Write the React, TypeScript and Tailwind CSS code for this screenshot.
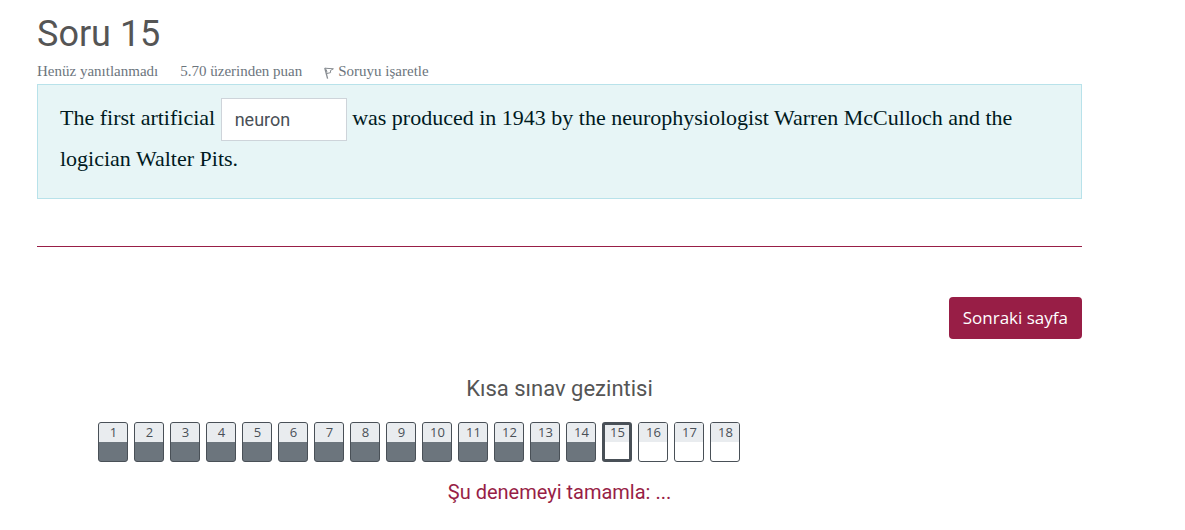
import { useState } from "react";

const pages = Array.from({ length: 18 }, (_, i) => i + 1);
const current = 15;

function FlagIcon() {
  return (
    <svg
      viewBox="0 0 10 12"
      className="mt-1 h-3 w-[10px]"
      fill="none"
      stroke="#868b90"
      strokeWidth="1"
      aria-hidden="true"
    >
      <path d="M0.8 1 L3.6 11.6" strokeWidth="1.3" />
      <path d="M0.8 1.2 L9.4 1.8 L6.4 3.6 L6.6 5.6 L2.6 6.6" />
      <path d="M2.2 2.4 L3 5.4" />
    </svg>
  );
}

function PageButton({ page }: { page: number }) {
  const answered = page < current;
  const active = page === current;
  return (
    <a
      href={`#page-${page}`}
      aria-current={active ? "page" : undefined}
      className={`block h-10 w-[30px] overflow-hidden rounded-[3px] border-[#495057] text-center text-[13px] ${
        active ? "border-3" : "border"
      } ${answered ? "bg-[#6c757d]" : "bg-white"}`}
    >
      <span
        className={`block bg-[#e9ecef] pl-px text-[#495057] ${
          active ? "h-[17px] leading-[15px]" : "h-[19px] leading-[19px]"
        }`}
      >
        {page}
      </span>
    </a>
  );
}

export default function App() {
  const [answer, setAnswer] = useState("neuron");
  return (
    <main className="bg-white pr-[103px] pb-6 pl-[37px] font-['Roboto',sans-serif] text-[#555]">
      <h1 className="pt-3 text-[36px] leading-[44px]">Soru 15</h1>
      <div className="flex flex-wrap items-center gap-x-[22px] pt-[3px] pb-px font-['Liberation_Serif',serif] text-[15px] leading-6 text-[#6c757d]">
        <span>Henüz yanıtlanmadı</span>
        <span>5.70 üzerinden puan</span>
        <a href="#flag" className="flex items-center gap-1">
          <FlagIcon />
          Soruyu işaretle
        </a>
      </div>
      <section className="border border-[#b8e2ea] bg-[#e7f5f6] px-[22px] pt-[13px] pb-[21px] font-['Liberation_Serif',serif] text-[22px] leading-9 text-[#001a1e]">
        <p>
          <label htmlFor="answer">The first artificial</label>{" "}
          <input
            id="answer"
            type="text"
            value={answer}
            onChange={(e) => setAnswer(e.target.value)}
            className="h-[43px] w-[126px] border border-[#ced4da] bg-white px-[13px] align-middle font-['Roboto',sans-serif] text-lg text-[#495057]"
          />{" "}
          was produced in 1943 by the neurophysiologist Warren McCulloch and the
          logician Walter Pits.
        </p>
      </section>
      <hr className="mt-[47px] h-px border-0 bg-[#981e46]" />
      <div className="mt-[50px] flex justify-end">
        <button
          type="button"
          className="h-[42px] rounded bg-[#981e46] px-[14px] font-['Open_Sans',sans-serif] text-[17px] text-white"
        >
          Sonraki sayfa
        </button>
      </div>
      <nav aria-labelledby="quiz-nav" className="pt-9">
        <h2 id="quiz-nav" className="text-center text-[22px] leading-7">
          Kısa sınav gezintisi
        </h2>
        <div className="mt-[19px] flex flex-wrap gap-[6px] px-[61px] font-['Open_Sans',sans-serif]">
          {pages.map((page) => (
            <PageButton key={page} page={page} />
          ))}
        </div>
        <p className="mt-4 text-center text-xl leading-7">
          <a href="#finish" className="text-[#981e46]">
            Şu denemeyi tamamla: ...
          </a>
        </p>
      </nav>
    </main>
  );
}
